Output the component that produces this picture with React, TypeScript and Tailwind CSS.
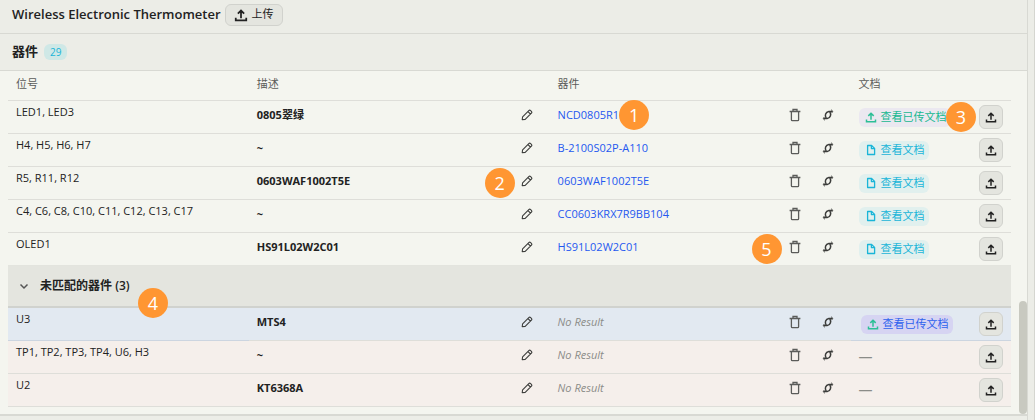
import { type ReactNode } from 'react';
import clsx from 'clsx';

type DocKind = 'uploaded' | 'view' | 'none';

interface Part {
  refs: string;
  desc: string;
  part?: string;
  doc: DocKind;
  active?: boolean;
  marks?: { [column: string]: number };
}

const matched: Part[] = [
  { refs: 'LED1, LED3', desc: '0805翠绿', part: 'NCD0805R1', doc: 'uploaded', marks: { part: 1, doc: 3 } },
  { refs: 'H4, H5, H6, H7', desc: '~', part: 'B-2100S02P-A110', doc: 'view' },
  { refs: 'R5, R11, R12', desc: '0603WAF1002T5E', part: '0603WAF1002T5E', doc: 'view', marks: { desc: 2 } },
  { refs: 'C4, C6, C8, C10, C11, C12, C13, C17', desc: '~', part: 'CC0603KRX7R9BB104', doc: 'view' },
  { refs: 'OLED1', desc: 'HS91L02W2C01', part: 'HS91L02W2C01', doc: 'view', marks: { remove: 5 } },
];

const unmatched: Part[] = [
  { refs: 'U3', desc: 'MTS4', doc: 'uploaded', active: true },
  { refs: 'TP1, TP2, TP3, TP4, U6, H3', desc: '~', doc: 'none' },
  { refs: 'U2', desc: 'KT6368A', doc: 'none' },
];

function UploadIcon({ className }: { className?: string }) {
  return (
    <svg viewBox="0 0 12 12" fill="none" stroke="currentColor" strokeWidth="1.5" className={className} aria-hidden="true">
      <path d="M6 8.7V2.4M3.3 4.9L6 2.2l2.7 2.7M1.5 8.4v2.3h9V8.4" />
    </svg>
  );
}

function PencilIcon() {
  return (
    <svg viewBox="0 0 12 12" fill="none" stroke="currentColor" strokeWidth="1.1" strokeLinejoin="round" className="size-3" aria-hidden="true">
      <path d="M1.2 10.8l.4-3 6.2-6.2a1.3 1.3 0 0 1 1.8 0l.8.8a1.3 1.3 0 0 1 0 1.8l-6.2 6.2zM7 2.6l2.4 2.4" />
    </svg>
  );
}

function TrashIcon() {
  return (
    <svg viewBox="0 0 12 14" fill="none" stroke="currentColor" strokeWidth="1.3" className="h-3.5 w-3" aria-hidden="true">
      <path d="M.6 3.5h10.8M2.4 3.5v8.2a1 1 0 0 0 1 1h5.2a1 1 0 0 0 1-1V3.5M4 3.3V1.5h4v1.8" />
    </svg>
  );
}

function SwapIcon() {
  return (
    <svg viewBox="0 0 12 12" fill="none" stroke="currentColor" strokeWidth="1.5" className="size-3" aria-hidden="true">
      <path d="M4.2 9C2.4 6.6 3.6 2.9 6.8 2.4h3.6M7.8 3C9.6 5.4 8.4 9.1 5.2 9.6H1.6" />
      <path d="M9.2.8l1.6 1.6-1 1.4M2.8 11.2L1.2 9.6l1-1.4" strokeWidth="1" />
    </svg>
  );
}

function FileIcon() {
  return (
    <svg viewBox="0 0 12 12" fill="none" stroke="currentColor" strokeWidth="1.3" strokeLinejoin="round" className="size-3" aria-hidden="true">
      <path d="M2.6 1.5h4l3 2.9v6.1h-7zM6.4 1.7v2.9h3" />
    </svg>
  );
}

function Mark({ n, className }: { n: number; className?: string }) {
  return (
    <span className={clsx('absolute z-10 flex size-[30px] items-center justify-center rounded-full bg-[#ff9632] text-lg leading-none text-white', className)}>
      {n}
    </span>
  );
}

function DocLink({ kind, active }: { kind: DocKind; active?: boolean }) {
  if (kind === 'none') return <span className="text-sm text-[#8b8c88]">—</span>;
  const uploaded = kind === 'uploaded';
  return (
    <a
      href="#doc"
      className={clsx(
        'flex h-[19px] items-center gap-1 rounded-md pr-1 pl-1.5 whitespace-nowrap',
        !uploaded && 'bg-[#e1f0ee] text-[#19b5d8]',
        uploaded && !active && 'bg-[#ebe8f0] text-[#17b890]',
        active && 'ml-0.5 bg-[#d6d4f2] text-[#2e62ee]',
      )}
    >
      {uploaded ? <UploadIcon className="size-3 text-[#2dbf96]" /> : <FileIcon />}
      {uploaded ? '查看已传文档' : '查看文档'}
    </a>
  );
}

function Cell({ children, className }: { children: ReactNode; className?: string }) {
  return <td className={clsx('border-b px-2 align-top', className)}>{children}</td>;
}

function PartRow({ row, warn, last }: { row: Part; warn?: boolean; last?: boolean }) {
  const edge = last ? 'border-[#e3e4de]' : 'border-[#deded9]';
  const outerEdge = row.active ? 'border-[#ccd5e0]' : edge;
  return (
    <tr className={clsx(row.active ? 'bg-[#e2e9f1]' : warn && 'bg-[#f5efeb]')}>
      <Cell className={clsx('pt-[3px] leading-4', outerEdge)}>{row.refs}</Cell>
      <Cell className={clsx('pt-1', edge)}>
        <div className="relative flex h-5 items-center justify-between pr-[9px]">
          <span className="font-bold">{row.desc}</span>
          {row.marks?.desc && <Mark n={row.marks.desc} className="-top-[3px] right-[27px]" />}
          <button type="button" aria-label="编辑" className="text-[#3c3d3b]"><PencilIcon /></button>
        </div>
      </Cell>
      <Cell className={clsx('pt-1', edge)}>
        <div className="flex h-5 items-center">
          <span className="relative">
            {row.part ? <a href="#part" className="text-[#2558f0]">{row.part}</a> : <em className="text-[#8b8c88]">No Result</em>}
            {row.marks?.part && <Mark n={row.marks.part} className="-top-[7px] -right-[30px]" />}
          </span>
          <div className="relative ml-auto flex items-center gap-[21px] pr-[9px]">
            {row.marks?.remove && <Mark n={row.marks.remove} className="-top-1.5 -left-[37px]" />}
            <button type="button" aria-label="删除" className="text-[#5b5c5a]"><TrashIcon /></button>
            <button type="button" aria-label="替换" className="text-[#3c3d3b]"><SwapIcon /></button>
          </div>
        </div>
      </Cell>
      <Cell className={clsx('py-1', outerEdge)}>
        <div className="relative flex items-center justify-between">
          <DocLink kind={row.doc} active={row.active} />
          {row.marks?.doc && <Mark n={row.marks.doc} className="-top-[3px] right-[27px]" />}
          <button type="button" aria-label="上传文档" className="flex size-6 items-center justify-center rounded-md border border-[#d1d2cd] bg-[#e4e5df] text-[#222]">
            <UploadIcon className="size-3" />
          </button>
        </div>
      </Cell>
    </tr>
  );
}

export default function App() {
  return (
    <div className="flex min-h-screen border-r border-[#d5d6d0] bg-[#ecede7] font-['Open_Sans','Noto_Sans_CJK_SC',sans-serif] text-[11px] text-[#222]">
      <div className="mr-1.5 min-w-0 flex-1 border-r border-[#d8d9d3]">
        <header className="flex h-[34px] items-center gap-1 border-b border-[#d8d9d3] px-3 pb-1">
          <h1 className="text-[13px] font-semibold">Wireless Electronic Thermometer</h1>
          <button type="button" className="flex h-[22px] items-center gap-1 rounded-md border border-[#d1d2cd] bg-[#e4e5df] px-2">
            <UploadIcon className="size-3.5" />
            上传
          </button>
        </header>
        <section className="relative border-b-2 border-[#d8d9d3] bg-[#f4f5ef] pb-[7px]">
          <div className="flex h-[37px] items-center gap-1.5 border-b border-[#d8d9d3] bg-[#ecede7] px-3">
            <h2 className="text-[13px] font-bold">器件</h2>
            <span className="rounded-md bg-[#cfe8e6] px-1.5 text-[10px] leading-4 text-[#19b5d8]">29</span>
          </div>
          <div className="pr-4 pl-2">
            <table className="w-full table-fixed border-separate border-spacing-0">
              <thead>
                <tr className="h-[30px] text-left text-[#5b5c5a] [&>th]:border-b [&>th]:border-[#deded9] [&>th]:px-2 [&>th]:pb-0.5 [&>th]:font-normal">
                  <th className="w-[24%]">位号</th>
                  <th className="w-[30%]">描述</th>
                  <th className="w-[30%]">器件</th>
                  <th>文档</th>
                </tr>
              </thead>
              <tbody>
                {matched.map((row, i) => <PartRow key={row.refs} row={row} last={i === matched.length - 1} />)}
                <tr className="h-[42px] bg-[#e4e5df]">
                  <td colSpan={4} className="relative border-b-2 border-[#d0d2ce] px-2.5">
                    <button type="button" className="flex items-center gap-2.5 text-xs font-bold">
                      <svg viewBox="0 0 12 12" fill="none" stroke="#555" strokeWidth="1.5" className="size-3" aria-hidden="true">
                        <path d="M2.5 4.5L6 8l3.5-3.5" />
                      </svg>
                      <span>未匹配的器件 <span className="font-semibold">(3)</span></span>
                    </button>
                    <Mark n={4} className="-bottom-3 left-[130px]" />
                  </td>
                </tr>
                {unmatched.map((row) => <PartRow key={row.refs} row={row} warn />)}
              </tbody>
            </table>
          </div>
          <div className="absolute right-0 bottom-0 h-[113px] w-2 rounded-full bg-[#c8c9c0]" />
        </section>
      </div>
    </div>
  );
}
